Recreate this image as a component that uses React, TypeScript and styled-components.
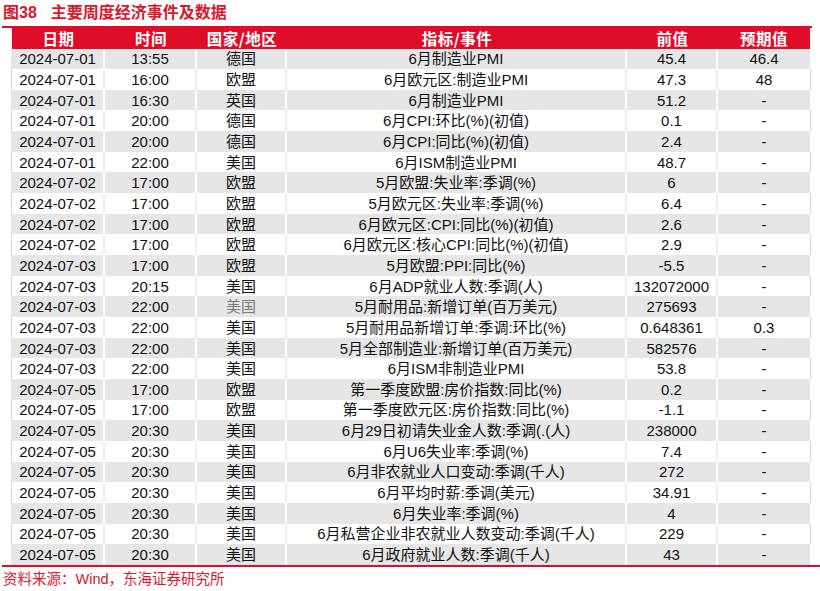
import React from "react";
import styled, { createGlobalStyle } from "styled-components";

const Global = createGlobalStyle`
  html, body { margin: 0; padding: 0; background: #ffffff; }
  body { width: 820px; height: 591px; overflow: hidden; }
`;

const RED = "#E00D29";

const Page = styled.div`
  width: 820px;
  height: 591px;
  display: flex;
  flex-direction: column;
  font-family: "Liberation Sans", "Noto Sans CJK SC", sans-serif;
  color: #111;
`;

const Title = styled.div`
  height: 26px;
  line-height: 26px;
  padding-left: 3px;
  font-family: "Liberation Sans", "Noto Sans CJK SC", sans-serif;
  font-weight: 700;
  font-size: 16px;
  color: #D9182B;
  display: flex;
  gap: 14px;
`;

const Rule = styled.div<{ $right: number }>`
  height: 2px;
  margin-left: 2px;
  margin-right: ${(p) => p.$right}px;
  background: ${RED};
`;

const Table = styled.div`
  margin-left: 11px;
  width: 800px;
  display: flex;
  flex-direction: column;
`;

const COLS = "93px 92px 90px 340px 91px 92px";

const HeaderRow = styled.div`
  display: grid;
  grid-template-columns: ${COLS};
  height: 20.5px;
  background: ${RED};
  margin-left: 1px;
  width: 798px;
`;

const HeadCell = styled.div`
  display: flex;
  align-items: center;
  justify-content: center;
  color: #fff;
  font-family: "Noto Sans CJK SC", serif;
  font-weight: 700;
  font-size: 15.5px;
  line-height: 1;
  letter-spacing: 0.5px;
`;

const Row = styled.div<{ $shade: boolean }>`
  display: grid;
  grid-template-columns: ${COLS};
  height: 20.66px;
  background: ${(p) => (p.$shade ? "#E6E6E6" : "#FFFFFF")};
  border-left: 1px solid ${(p) => (p.$shade ? "#E6E6E6" : "#D4D4D4")};
  border-right: 1px solid ${(p) => (p.$shade ? "#FFFFFF" : "#D4D4D4")};
`;

const Cell = styled.div<{ $shade: boolean; $muted?: boolean; $last?: boolean }>`
  display: flex;
  align-items: center;
  justify-content: center;
  font-size: 15px;
  line-height: 1;
  white-space: nowrap;
  color: ${(p) => (p.$muted ? "#7a7a7a" : "#111")};
  border-right: ${(p) =>
    p.$last ? "none" : `2px solid ${p.$shade ? "#FFFFFF" : "#EFEFEF"}`};
`;

const Footer = styled.div`
  height: 24px;
  line-height: 24px;
  padding-left: 3px;
  font-size: 14.5px;
  color: #E0162B;
  font-family: "Liberation Sans", "Noto Sans CJK SC", sans-serif;
`;

const BottomRule = styled.div`
  height: 2px;
  margin-left: 2px;
  background: ${RED};
`;

type R = [string, string, string, string, string, string, boolean?];

const rows: R[] = [
  ["2024-07-01", "13:55", "德国", "6月制造业PMI", "45.4", "46.4"],
  ["2024-07-01", "16:00", "欧盟", "6月欧元区:制造业PMI", "47.3", "48"],
  ["2024-07-01", "16:30", "英国", "6月制造业PMI", "51.2", "-"],
  ["2024-07-01", "20:00", "德国", "6月CPI:环比(%)(初值)", "0.1", "-"],
  ["2024-07-01", "20:00", "德国", "6月CPI:同比(%)(初值)", "2.4", "-"],
  ["2024-07-01", "22:00", "美国", "6月ISM制造业PMI", "48.7", "-"],
  ["2024-07-02", "17:00", "欧盟", "5月欧盟:失业率:季调(%)", "6", "-"],
  ["2024-07-02", "17:00", "欧盟", "5月欧元区:失业率:季调(%)", "6.4", "-"],
  ["2024-07-02", "17:00", "欧盟", "6月欧元区:CPI:同比(%)(初值)", "2.6", "-"],
  ["2024-07-02", "17:00", "欧盟", "6月欧元区:核心CPI:同比(%)(初值)", "2.9", "-"],
  ["2024-07-03", "17:00", "欧盟", "5月欧盟:PPI:同比(%)", "-5.5", "-"],
  ["2024-07-03", "20:15", "美国", "6月ADP就业人数:季调(人)", "132072000", "-"],
  ["2024-07-03", "22:00", "美国", "5月耐用品:新增订单(百万美元)", "275693", "-", true],
  ["2024-07-03", "22:00", "美国", "5月耐用品新增订单:季调:环比(%)", "0.648361", "0.3"],
  ["2024-07-03", "22:00", "美国", "5月全部制造业:新增订单(百万美元)", "582576", "-"],
  ["2024-07-03", "22:00", "美国", "6月ISM非制造业PMI", "53.8", "-"],
  ["2024-07-05", "17:00", "欧盟", "第一季度欧盟:房价指数:同比(%)", "0.2", "-"],
  ["2024-07-05", "17:00", "欧盟", "第一季度欧元区:房价指数:同比(%)", "-1.1", "-"],
  ["2024-07-05", "20:30", "美国", "6月29日初请失业金人数:季调(.(人)", "238000", "-"],
  ["2024-07-05", "20:30", "美国", "6月U6失业率:季调(%)", "7.4", "-"],
  ["2024-07-05", "20:30", "美国", "6月非农就业人口变动:季调(千人)", "272", "-"],
  ["2024-07-05", "20:30", "美国", "6月平均时薪:季调(美元)", "34.91", "-"],
  ["2024-07-05", "20:30", "美国", "6月失业率:季调(%)", "4", "-"],
  ["2024-07-05", "20:30", "美国", "6月私营企业非农就业人数变动:季调(千人)", "229", "-"],
  ["2024-07-05", "20:30", "美国", "6月政府就业人数:季调(千人)", "43", "-"],
];

const heads = ["日期", "时间", "国家/地区", "指标/事件", "前值", "预期值"];

export default function App() {
  return (
    <>
      <Global />
      <Page>
        <Title>
          <span>图38</span>
          <span>主要周度经济事件及数据</span>
        </Title>
        <Rule $right={8} />
        <Table>
          <HeaderRow>
            {heads.map((h) => (
              <HeadCell key={h}>{h}</HeadCell>
            ))}
          </HeaderRow>
          {rows.map((r, i) => {
            const shade = i % 2 === 0;
            return (
              <Row key={i} $shade={shade}>
                <Cell $shade={shade}>{r[0]}</Cell>
                <Cell $shade={shade}>{r[1]}</Cell>
                <Cell $shade={shade} $muted={!!r[6]}>
                  {r[2]}
                </Cell>
                <Cell $shade={shade}>{r[3]}</Cell>
                <Cell $shade={shade}>{r[4]}</Cell>
                <Cell $shade={shade} $last>
                  {r[5]}
                </Cell>
              </Row>
            );
          })}
        </Table>
        <BottomRule />
        <Footer>资料来源：Wind，东海证券研究所</Footer>
      </Page>
    </>
  );
}
